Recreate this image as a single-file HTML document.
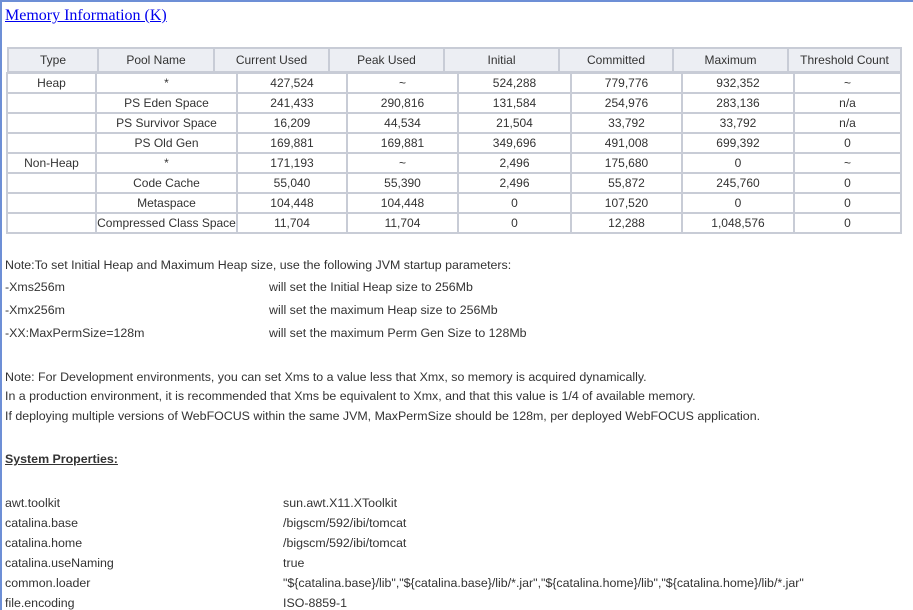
<!DOCTYPE html>
<html><head><style>
body{margin:0;width:913px;height:610px;overflow:hidden;background:#fff;font-family:"Liberation Sans",sans-serif;font-size:12.4px;color:#333;position:relative}
.fr{position:absolute;background:#6d8fd6}
.t{position:absolute;white-space:nowrap;line-height:14px}
.h{position:absolute;background:#eceef3;border:2px solid #c8ccd6;box-sizing:border-box;text-align:center;line-height:23px;height:26px;top:47px;white-space:nowrap;font-size:12px}
.c{position:absolute;border:2px solid #c8ccd6;box-sizing:border-box;text-align:center;line-height:19px;height:22px;white-space:nowrap;font-size:12px}
</style></head><body>
<div class="fr" style="left:0;top:0;width:913px;height:2px"></div>
<div class="fr" style="left:0;top:0;width:2px;height:610px"></div>
<div class="t" style="left:5px;top:7px;font-family:'Liberation Serif',serif;font-size:16px;line-height:18px;color:#00e;text-decoration:underline">Memory Information (K)</div>
<div id="tb"></div>
<div class="t" style="left:5px;top:258px">Note:To set Initial Heap and Maximum Heap size, use the following JVM startup parameters:</div>
<div class="t" style="left:5px;top:280px">-Xms256m</div><div class="t" style="left:269px;top:280px">will set the Initial Heap size to 256Mb</div>
<div class="t" style="left:5px;top:303px">-Xmx256m</div><div class="t" style="left:269px;top:303px">will set the maximum Heap size to 256Mb</div>
<div class="t" style="left:5px;top:326px">-XX:MaxPermSize=128m</div><div class="t" style="left:269px;top:326px">will set the maximum Perm Gen Size to 128Mb</div>
<div class="t" style="left:5px;top:370px">Note: For Development environments, you can set Xms to a value less that Xmx, so memory is acquired dynamically.</div>
<div class="t" style="left:5px;top:389px">In a production environment, it is recommended that Xms be equivalent to Xmx, and that this value is 1/4 of available memory.</div>
<div class="t" style="left:5px;top:409px">If deploying multiple versions of WebFOCUS within the same JVM, MaxPermSize should be 128m, per deployed WebFOCUS application.</div>
<div class="t" style="left:5px;top:452px;font-weight:bold;text-decoration:underline">System Properties:</div>
<div class="t" style="left:5px;top:496px">awt.toolkit</div><div class="t" style="left:283px;top:496px">sun.awt.X11.XToolkit</div>
<div class="t" style="left:5px;top:516px">catalina.base</div><div class="t" style="left:283px;top:516px">/bigscm/592/ibi/tomcat</div>
<div class="t" style="left:5px;top:536px">catalina.home</div><div class="t" style="left:283px;top:536px">/bigscm/592/ibi/tomcat</div>
<div class="t" style="left:5px;top:556px">catalina.useNaming</div><div class="t" style="left:283px;top:556px">true</div>
<div class="t" style="left:5px;top:576px">common.loader</div><div class="t" style="left:283px;top:576px">"${catalina.base}/lib","${catalina.base}/lib/*.jar","${catalina.home}/lib","${catalina.home}/lib/*.jar"</div>
<div class="t" style="left:5px;top:596px">file.encoding</div><div class="t" style="left:283px;top:596px">ISO-8859-1</div>
<script>
var hx=[7,97,213,328,443,558,672,787,902],hn=["Type","Pool Name","Current Used","Peak Used","Initial","Committed","Maximum","Threshold Count"];
var bx=[6,95,236,346,457,570,681,793,902];
var rows=[["Heap","*","427,524","~","524,288","779,776","932,352","~"],
["","PS Eden Space","241,433","290,816","131,584","254,976","283,136","n/a"],
["","PS Survivor Space","16,209","44,534","21,504","33,792","33,792","n/a"],
["","PS Old Gen","169,881","169,881","349,696","491,008","699,392","0"],
["Non-Heap","*","171,193","~","2,496","175,680","0","~"],
["","Code Cache","55,040","55,390","2,496","55,872","245,760","0"],
["","Metaspace","104,448","104,448","0","107,520","0","0"],
["","Compressed Class Space","11,704","11,704","0","12,288","1,048,576","0"]];
var h="";
for(var i=0;i<8;i++)h+='<div class="h" style="left:'+hx[i]+'px;width:'+(hx[i+1]-hx[i]+(i==7?0:2))+'px">'+hn[i]+'</div>';
for(var r=0;r<8;r++)for(var i=0;i<8;i++)h+='<div class="c" style="top:'+(72+r*20)+'px;left:'+bx[i]+'px;width:'+(bx[i+1]-bx[i]+(i==7?0:2))+'px">'+rows[r][i]+'</div>';
document.getElementById("tb").innerHTML=h;
</script>
</body></html>
